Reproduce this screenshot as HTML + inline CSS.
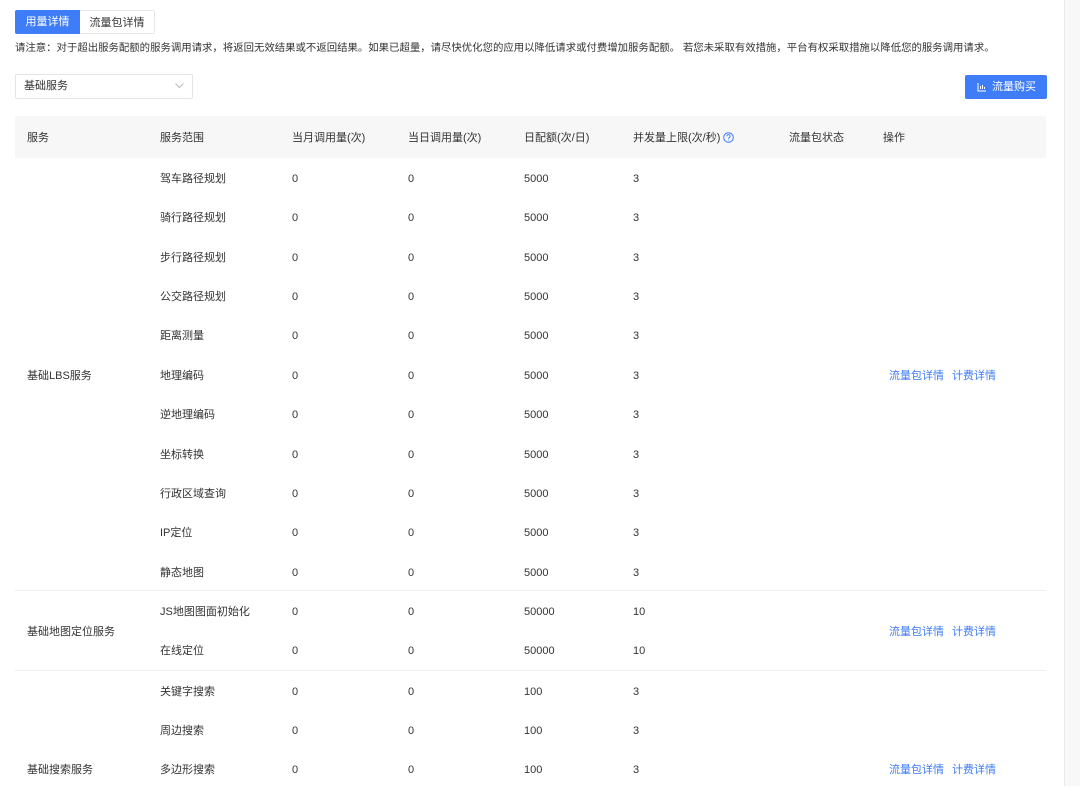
<!DOCTYPE html>
<html><head><meta charset="utf-8"><style>
*{margin:0;padding:0;box-sizing:border-box}
body{width:1080px;height:786px;overflow:hidden;background:#fff;font-family:"Liberation Sans","Noto Sans CJK SC",sans-serif;font-size:11px;color:#333;position:relative}
.a{position:absolute;white-space:nowrap}
.tab{position:absolute;top:10px;height:24px;line-height:24px;text-align:center;font-size:11px}
.row{position:absolute;left:15px;width:1031px;height:39.36px}
.row span{position:absolute;top:2px;line-height:39.36px;white-space:nowrap}
.link{color:#3d7bf7}
</style></head><body>
<div class="tab" style="left:15px;width:65px;background:#3f7cf8;color:#fff;border-radius:2px 0 0 2px">用量详情</div>
<div class="tab" style="left:80px;width:75px;border:1px solid #e6e6e6;border-left:none;border-radius:0 2px 2px 0">流量包详情</div>
<div class="a" style="left:15px;top:41px;line-height:16px;font-size:10.4px">请注意：对于超出服务配额的服务调用请求，将返回无效结果或不返回结果。如果已超量，请尽快优化您的应用以降低请求或付费增加服务配额。 若您未采取有效措施，平台有权采取措施以降低您的服务调用请求。</div>
<div class="a" style="left:15px;top:74px;width:178px;height:25px;border:1px solid #e4e4e4;border-radius:2px;line-height:23px;padding-left:8px">基础服务
<svg style="position:absolute;right:8px;top:8px" width="9" height="6" viewBox="0 0 9 6"><path d="M0.5 0.5L4.5 4.5L8.5 0.5" fill="none" stroke="#bbb" stroke-width="1"/></svg></div>
<div class="a" style="left:965px;top:75px;width:82px;height:24px;background:#3f7cf8;border-radius:2px;color:#fff;line-height:24px;padding-left:27px">流量购买
<svg style="position:absolute;left:12px;top:7px" width="10" height="10" viewBox="0 0 10 10"><path d="M1 1V9H9M3.5 7V4M5.5 7V3M7.5 7V5" stroke="#fff" stroke-width="1" fill="none"/></svg></div>
<div class="a" style="left:15px;top:116px;width:1031px;height:42px;background:#f7f7f7"></div>
<div class="a" style="top:117px;line-height:42px;left:27px">服务</div>
<div class="a" style="top:117px;line-height:42px;left:160px">服务范围</div>
<div class="a" style="top:117px;line-height:42px;left:292px">当月调用量(次)</div>
<div class="a" style="top:117px;line-height:42px;left:408px">当日调用量(次)</div>
<div class="a" style="top:117px;line-height:42px;left:524px">日配额(次/日)</div>
<div class="a" style="top:117px;line-height:42px;left:633px">并发量上限(次/秒) <svg style="vertical-align:-2px" width="11" height="11" viewBox="0 0 11 11"><circle cx="5.5" cy="5.5" r="4.8" fill="none" stroke="#3f7cf8"/><path d="M3.9 4.3a1.6 1.6 0 1 1 2.2 1.4c-.5.2-.6.5-.6 1" fill="none" stroke="#3f7cf8" stroke-width=".9"/><circle cx="5.5" cy="8" r=".55" fill="#3f7cf8"/></svg></div>
<div class="a" style="top:117px;line-height:42px;left:789px">流量包状态</div>
<div class="a" style="top:117px;line-height:42px;left:883px">操作</div>

<div class="row" style="top:158px"><span style="left:145px">驾车路径规划</span><span style="left:277px">0</span><span style="left:393px">0</span><span style="left:509px">5000</span><span style="left:618px">3</span></div>
<div class="row" style="top:197.4px"><span style="left:145px">骑行路径规划</span><span style="left:277px">0</span><span style="left:393px">0</span><span style="left:509px">5000</span><span style="left:618px">3</span></div>
<div class="row" style="top:236.7px"><span style="left:145px">步行路径规划</span><span style="left:277px">0</span><span style="left:393px">0</span><span style="left:509px">5000</span><span style="left:618px">3</span></div>
<div class="row" style="top:276.1px"><span style="left:145px">公交路径规划</span><span style="left:277px">0</span><span style="left:393px">0</span><span style="left:509px">5000</span><span style="left:618px">3</span></div>
<div class="row" style="top:315.4px"><span style="left:145px">距离测量</span><span style="left:277px">0</span><span style="left:393px">0</span><span style="left:509px">5000</span><span style="left:618px">3</span></div>
<div class="row" style="top:354.8px"><span style="left:145px">地理编码</span><span style="left:277px">0</span><span style="left:393px">0</span><span style="left:509px">5000</span><span style="left:618px">3</span></div>
<div class="row" style="top:394.2px"><span style="left:145px">逆地理编码</span><span style="left:277px">0</span><span style="left:393px">0</span><span style="left:509px">5000</span><span style="left:618px">3</span></div>
<div class="row" style="top:433.5px"><span style="left:145px">坐标转换</span><span style="left:277px">0</span><span style="left:393px">0</span><span style="left:509px">5000</span><span style="left:618px">3</span></div>
<div class="row" style="top:472.9px"><span style="left:145px">行政区域查询</span><span style="left:277px">0</span><span style="left:393px">0</span><span style="left:509px">5000</span><span style="left:618px">3</span></div>
<div class="row" style="top:512.2px"><span style="left:145px">IP定位</span><span style="left:277px">0</span><span style="left:393px">0</span><span style="left:509px">5000</span><span style="left:618px">3</span></div>
<div class="row" style="top:551.6px"><span style="left:145px">静态地图</span><span style="left:277px">0</span><span style="left:393px">0</span><span style="left:509px">5000</span><span style="left:618px">3</span></div>
<div class="a" style="left:15px;top:590px;width:1031px;border-top:1px solid #efefef"></div>
<div class="row" style="top:591px"><span style="left:145px">JS地图图面初始化</span><span style="left:277px">0</span><span style="left:393px">0</span><span style="left:509px">50000</span><span style="left:618px">10</span></div>
<div class="row" style="top:630.4px"><span style="left:145px">在线定位</span><span style="left:277px">0</span><span style="left:393px">0</span><span style="left:509px">50000</span><span style="left:618px">10</span></div>
<div class="a" style="left:15px;top:670px;width:1031px;border-top:1px solid #efefef"></div>
<div class="row" style="top:670.5px"><span style="left:145px">关键字搜索</span><span style="left:277px">0</span><span style="left:393px">0</span><span style="left:509px">100</span><span style="left:618px">3</span></div>
<div class="row" style="top:709.9px"><span style="left:145px">周边搜索</span><span style="left:277px">0</span><span style="left:393px">0</span><span style="left:509px">100</span><span style="left:618px">3</span></div>
<div class="row" style="top:749.2px"><span style="left:145px">多边形搜索</span><span style="left:277px">0</span><span style="left:393px">0</span><span style="left:509px">100</span><span style="left:618px">3</span></div>

<div class="a" style="left:27px;top:367px">基础LBS服务</div>
<div class="a" style="left:27px;top:623px">基础地图定位服务</div>
<div class="a" style="left:27px;top:761px">基础搜索服务</div>
<div class="a link" style="left:889px;top:367px">流量包详情</div><div class="a link" style="left:952px;top:367px">计费详情</div>
<div class="a link" style="left:889px;top:623px">流量包详情</div><div class="a link" style="left:952px;top:623px">计费详情</div>
<div class="a link" style="left:889px;top:761px">流量包详情</div><div class="a link" style="left:952px;top:761px">计费详情</div>

<div class="a" style="left:1064px;top:0;width:16px;height:786px;background:#f8f8f8;border-left:1px solid #e8e8e8"></div>
</body></html>
